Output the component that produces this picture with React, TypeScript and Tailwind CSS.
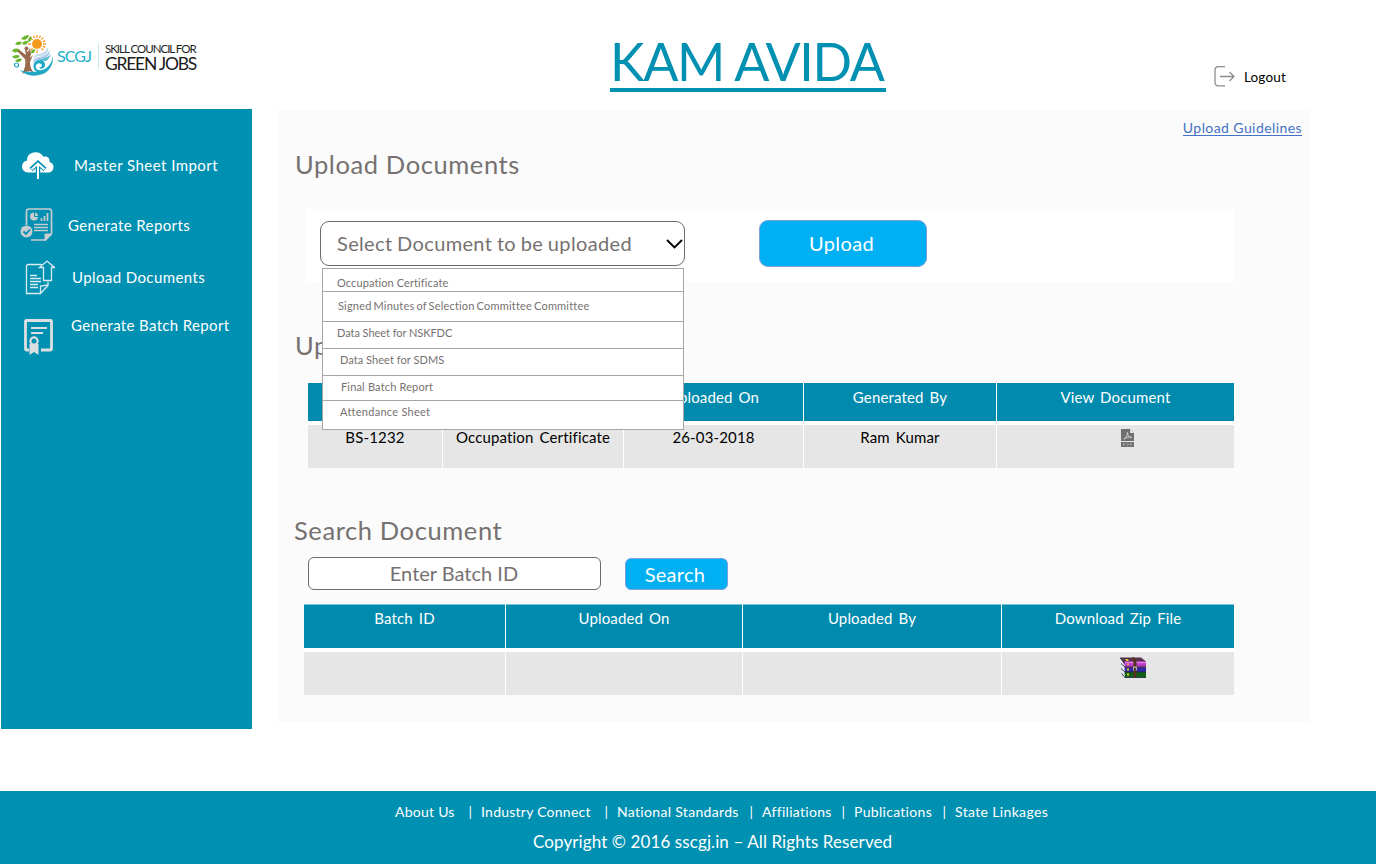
import type { ReactNode } from "react";

function TreeMark() {
  return (
    <svg width="44" height="44" viewBox="0 0 44 44" className="shrink-0">
      <g fill="#f59a1f" stroke="#f59a1f">
        <circle cx="26" cy="10" r="5" stroke="none" />
        <path d="M26 1v3M26 16v3M17 10h3M32 10h3M19.6 3.6l2 2M30.4 14.4l2 2M32.4 3.6l-2 2M21.6 14.4l-2 2M22.6 1.7l1 2.4M29.4 1.7l-1 2.4M34.3 6.6l-2.4 1M34.3 13.4l-2.4-1" strokeWidth="1.3" />
      </g>
      <g fill="#6cb52d">
        <path d="M10 5c2-3 5-4 8-4-1 4-4 6-8 4z" />
        <path d="M4 10c2-3 5-3 7-2-1 3-4 4-7 2z" />
        <path d="M1 17c2-3 5-3 8-1-2 3-6 3-8 1z" />
        <path d="M1 23c2-2 5-3 8-1-2 3-6 3-8 1z" />
        <path d="M11 10c1-3 4-4 6-3 0 3-3 5-6 3z" />
        <path d="M17 8c0-3 1-5 3-6 1 3 0 6-3 6z" />
        <path d="M4 27c2-2 4-3 7-2-1 3-4 4-7 2z" />
        <path d="M20 19c0-3 2-4 4-4 0 3-1 5-4 4z" />
      </g>
      <path d="M7 15l8 6c-.5-3-1-4-1-6l3 3 2-4 1 6-1 4 3-3-3 7c0 4 1 8 4 11l-4-2-4 1-4 2c3-5 4-11 3-15l-7-7z" fill="#9a6a4d" />
      <circle cx="15.500" cy="14.500" r="2" fill="#9a6a4d" />
      <path d="M22 27c5-7 11-1 17-11 0 5-3 8-9 9-3 1-6 1-8 4z" fill="#a9cbe9" />
      <path d="M23 22c5-4 9 0 14-9 1 6-3 10-9 9-2 0-4 1-5 3z" fill="#c5dcf1" />
      <path d="M42 22c1 9-5 18-14 19-8 2-15-1-19-5 7 3 13 1 17 2-4-2-5-8-1-11 4-3 10 0 9 5-1 3-5 4-6 1 2 1 4-1 2-3-3-2-6 1-5 4 2 5 15 2 17-12z" fill="#20a9c4" />
      <path d="M24 28c4-4 10-2 16-8-3 8-6 8-10 6z" fill="#56bcd2" />
      <circle cx="5.500" cy="31" r="2" fill="none" stroke="#20a9c4" strokeWidth="1.200" />
    </svg>
  );
}

function CloudIcon() {
  return (
    <svg width="33" height="29" viewBox="0 0 33 29" fill="none" className="shrink-0">
      <path d="M7.500 21.500C3.500 21.500 1 18.500 1 15.500S3 10 6 9.500C6 4 10 1.300 14.500 1.300c4 0 6.500 2 7.800 4.500 4-1.200 7 1.500 6.200 5.200 2.500.8 4 2.500 4 4.900 0 3.300-2.500 5.600-5.500 5.600z" fill="white" />
      <path d="M10 18.500l7-6.500 7 6.500M17 13v15" stroke="#0090b1" strokeWidth="4.500" />
      <path d="M10.500 18.500l6.500-6 6.500 6M17 13V28" stroke="white" strokeWidth="2" />
    </svg>
  );
}

function ReportIcon() {
  return (
    <svg width="33" height="34" viewBox="0 0 33 34" fill="none" stroke="#c6cccf" className="shrink-0">
      <path d="M6.500 17V3.500Q6.500 1 9 1h20q2.500 0 2.500 2.500V26l-6 6H11" strokeWidth="1.700" />
      <path d="M25 32.500V26h6.500z" fill="#c6cccf" />
      <circle cx="14" cy="8.500" r="4" fill="#c6cccf" stroke="none" />
      <path d="M14.500 4v4.500H19" stroke="#0090b1" strokeWidth="1" />
      <path d="M21.500 13v-3M24.500 13V8M27.500 13V5" strokeWidth="1.700" />
      <path d="M14 16.500h14M14 19.500h14M14 22.500h14" strokeWidth="1.500" />
      <circle cx="6.500" cy="23.500" r="6" fill="#c6cccf" stroke="none" />
      <path d="M3.500 23.500l2.500 2.500 4-4.500" stroke="#0090b1" strokeWidth="1.800" />
    </svg>
  );
}

function UploadDocIcon() {
  return (
    <svg width="30" height="35" viewBox="0 0 30 35" fill="none" stroke="#d9ecf2" strokeWidth="1.300" className="shrink-0">
      <path d="M17 4.500H3.500Q1.500 4.500 1.500 6.500v27h14l7.500-8V21.500" />
      <path d="M15.500 33.500v-7.500l7.500-1" />
      <path d="M18.500 20.500V7.500h-4L22 1l7.500 6.500h-3v13z" />
      <path d="M5 15.500h7M5 18.500h11M5 21.500h11M5 24.500h8M5 27.500h8" />
    </svg>
  );
}

function CertificateIcon() {
  return (
    <svg width="31" height="37" viewBox="0 0 31 37" fill="none" stroke="#dcdfe1" className="shrink-0">
      <path d="M6 32H3.500Q2.500 32 2.500 31V3.500Q2.500 2.500 3.500 2.500h24q1 0 1 1V31q0 1-1 1H18" strokeWidth="2.800" />
      <path d="M8 10h16M8 15h12" strokeWidth="2" />
      <path d="M6.500 26v11l4.500-3 4.500 3V26z" fill="#dcdfe1" stroke="none" />
      <circle cx="11" cy="23" r="3.600" fill="#0090b1" strokeWidth="2.200" />
    </svg>
  );
}

function PdfIcon() {
  return (
    <svg width="13" height="18" viewBox="0 0 13 18" className="block">
      <path d="M0 0h9l4 4v8H0z" fill="#707070" />
      <path d="M9 0v4h4z" fill="#e2e2e2" />
      <path d="M2.500 10c2-.5 4-3.500 4-6.500 0 3 1.500 5 4.500 5-3.500-1-6 0-7.500 1.500" fill="none" stroke="#d5d5d5" strokeWidth=".9" />
      <path d="M0 13h13v5H0z" fill="#707070" />
      <path d="M2.500 17v-2.700h1.300v1.200H2.500M6 14.300v2.400h.8l.7-.6v-1.200l-.7-.6zM9.500 17v-2.700h1.600M9.500 15.600H11" fill="none" stroke="#a9a9a9" strokeWidth=".7" />
    </svg>
  );
}

function ArchiveIcon() {
  return (
    <svg width="27" height="21" viewBox="0 0 27 21" className="block">
      <path d="M0 1l5 5v14.500L2 17.500z" fill="#e4e4ef" />
      <path d="M0 .5h21l5 4V7H4z" fill="#55304f" />
      <path d="M3.500 4.500h22.500v5H5z" fill="#b93cc6" />
      <path d="M5 5.500h21" stroke="#e27be6" strokeWidth="1.500" />
      <path d="M4.500 9.500h21.500V15H5z" fill="#2c26a4" />
      <path d="M5 10h21" stroke="#682950" strokeWidth="1.300" />
      <path d="M4.500 15h21.500v5.500H5z" fill="#116018" />
      <path d="M5 15h21M4.500 20.500h21.500" stroke="#202536" strokeWidth=".8" />
      <path d="M0 1l5 5M1 6.500l4 3.500M1 11.500l4 3.500M1.500 16.500l3.500 4" stroke="#30304a" strokeWidth=".9" />
      <path d="M11.500.5h3l2 4v16h-3V5z" fill="#56301c" />
      <path d="M13 9.500h4v4h-4z" fill="#b8aaa0" />
      <path d="M14 11h2v2.500h-2z" fill="#3d3430" />
      <path d="M5 2h2.500L9 4H6.500zM7 11.500h2v2H7zM7 16.500h2v2H7z" fill="#e6d21c" />
      <path d="M7 6.500h2v2H7z" fill="#d98b74" />
    </svg>
  );
}

const navItems: { label: string; icon: ReactNode; row: string; text: string }[] = [
  { label: "Master Sheet Import", icon: <CloudIcon />, row: "h-[50px] pl-5 gap-[20px]", text: "tracking-[0.45px]" },
  { label: "Generate Reports", icon: <ReportIcon />, row: "mt-[10px] h-[50px] pl-[19px] gap-[15px]", text: "tracking-[0.38px]" },
  { label: "Upload Documents", icon: <UploadDocIcon />, row: "mt-[2px] h-[50px] pl-6 gap-[17px]", text: "tracking-[0.4px]" },
  { label: "Generate Batch Report", icon: <CertificateIcon />, row: "mt-[9px] h-[50px] pl-[22px] gap-[17px]", text: "tracking-[0.35px] mb-[22px]" },
];

const options = [
  { label: "Occupation Certificate", row: "h-[23px] pl-[14px] pt-[7px]", text: "tracking-[0.1px]" },
  { label: "Signed Minutes of Selection Committee Committee", row: "h-[30px] pl-[15px]", text: "tracking-[0.19px] [word-spacing:-1px]" },
  { label: "Data Sheet for NSKFDC", row: "h-[27px] pl-[14px] pb-[3px]", text: "tracking-[-0.05px]" },
  { label: "Data Sheet for SDMS", row: "h-[27px] pl-[17px] pb-[3px]", text: "tracking-[0.05px]" },
  { label: "Final Batch Report", row: "h-[25px] pl-[18px] pb-[2px]", text: "tracking-[0.17px]" },
  { label: "Attendance Sheet", row: "h-[29px] pl-[17px] pb-[5px]", text: "tracking-[0.27px]" },
];

const footerLinks = [
  { label: "About Us", cls: "w-[86px]", text: "tracking-[0.25px]" },
  { label: "Industry Connect", cls: "w-[136px]", text: "tracking-[0.25px]" },
  { label: "National Standards", cls: "w-[145px]", text: "tracking-[0.32px]" },
  { label: "Affiliations", cls: "w-[92px]", text: "tracking-[0.3px]" },
  { label: "Publications", cls: "w-[101px]", text: "tracking-[0.3px]" },
  { label: "State Linkages", cls: "w-[94px]", text: "tracking-[0.35px]" },
];

function Heading({ children, className }: { children: ReactNode; className: string }) {
  return <h2 className={`whitespace-nowrap text-[25.5px] leading-8 tracking-[0.6px] text-[#767171] ${className}`}>{children}</h2>;
}

export default function App() {
  return (
    <div className="flex h-[864px] w-[1376px] flex-col overflow-hidden bg-white font-['Lato',sans-serif] [font-variant-ligatures:none]">
      <header className="flex h-[109px] shrink-0">
        <div className="flex w-[610px] items-start pl-[11px] pt-[34px]">
          <TreeMark />
          <span className="ml-[2px] mt-[12px] w-[36px] whitespace-nowrap text-[16px] leading-5 tracking-[-0.9px] text-[#20b0c8]">SCGJ</span>
          <div className="ml-[5px] mt-[9px] h-[26px] w-px bg-[#c8ecf2]" />
          <div className="ml-[6px] mt-[8px] whitespace-nowrap text-[#1c1c1c]">
            <div className="text-[11.5px] leading-[14px] tracking-[-1px]">SKILL COUNCIL FOR</div>
            <div className="text-[17.5px] leading-[16px] tracking-[-1.25px]">GREEN JOBS</div>
          </div>
        </div>
        <h1 className="mt-[32px] h-[60px] w-[276px] whitespace-nowrap border-b-4 border-[#0090b1] text-[52px] leading-[59px] tracking-[-1.3px] text-[#0090b1]">KAM AVIDA</h1>
        <button className="ml-[328px] mt-[65px] flex h-[23px] items-center gap-[9px]">
          <svg width="21" height="22" viewBox="0 0 21 22" fill="none" stroke="#8c8c8c" strokeWidth="1.300">
            <path d="M11 .7H4.500Q1 .7 1 4v12.500q0 3.300 3.500 3.300H11M6 10.500h14M15.500 6L20 10.500 15.500 15" />
          </svg>
          <span className="text-[13.5px] leading-5 tracking-[0.15px] text-black">Logout</span>
        </button>
      </header>

      <div className="flex h-[682px] shrink-0">
        <nav className="ml-px h-[620px] w-[251px] bg-[#0090b1] pt-[31px]">
          {navItems.map((n) => (
            <a key={n.label} className={`flex items-center whitespace-nowrap text-[15px] text-white ${n.row}`}>
              {n.icon}
              <span className={n.text}>{n.label}</span>
            </a>
          ))}
        </nav>

        <main className="ml-[25px] mt-px flex h-[612px] w-[1033px] flex-col bg-[#fbfbfb]">
          <a className="mr-2 mt-[9px] self-end whitespace-nowrap border-b border-[#4472c4] pt-px text-[14px] leading-[15px] tracking-[0.42px] text-[#4472c4]">Upload Guidelines</a>
          <Heading className="ml-[18px] mt-[12px]">Upload Documents</Heading>

          <div className="ml-[29px] mt-[29px] flex h-[73px] w-[929px] shrink-0 bg-white">
            <div className="relative ml-[14px] mt-[12px] h-[45px] w-[365px]">
              <button className="flex h-[45px] w-[365px] items-center justify-between rounded-[9px] border border-[#6b6b6b] bg-white pl-4 pr-px text-[20px] text-[#767171]">
                <span className="mb-[2px] whitespace-nowrap tracking-[0.35px] [word-spacing:-0.8px]">Select Document to be uploaded</span>
                <svg width="17" height="10" viewBox="0 0 17 10" fill="none" stroke="black" strokeWidth="1.800">
                  <path d="M1 1l7.500 7.500L16 1" />
                </svg>
              </button>
              <ul className="absolute left-[2px] top-[47px] z-10 w-[362px] border-x border-t border-[#a6a6a6] bg-white text-[11px] text-[#767171]">
                {options.map((o) => (
                  <li key={o.label} className={`flex items-center whitespace-nowrap border-b border-[#a6a6a6] ${o.row}`}>
                    <span className={o.text}>{o.label}</span>
                  </li>
                ))}
              </ul>
            </div>
            <button className="ml-[74px] mt-[11px] h-[47px] w-[168px] rounded-[9px] border border-[#7f9fdc] bg-[#00b0f3] pb-[2px] pr-[3px] text-[20px] tracking-[0.4px] text-white">Upload</button>
          </div>

          <Heading className="ml-[18px] mt-[47px]">Uploaded Documents</Heading>
          <div className="ml-[31px] mt-[22px] grid w-[926px] shrink-0 grid-cols-[134px_180px_179px_192px_237px] grid-rows-[38px_43px] gap-x-px gap-y-[4px] bg-white text-center text-[15px] leading-5 [word-spacing:2px]">
            {["Batch ID", "Document Name", "Uploaded On", "Generated By", "View Document"].map((h) => (
              <div key={h} className="bg-[#008bae] pt-[4px] tracking-[0.15px] text-white">{h}</div>
            ))}
            {["BS-1232", "Occupation Certificate", "26-03-2018", "Ram Kumar"].map((c) => (
              <div key={c} className="whitespace-nowrap bg-[#e6e6e6] pt-[2px] tracking-[0.15px] text-black">{c}</div>
            ))}
            <div className="flex justify-center bg-[#e6e6e6] pl-6 pt-[4px]"><PdfIcon /></div>
          </div>

          <Heading className="ml-[17px] mt-[46px]">Search Document</Heading>
          <div className="ml-[31px] mt-[11px] flex h-[33px] shrink-0">
            <div className="flex h-[33px] w-[293px] items-center justify-center rounded-[6px] border border-[#6b6b6b] bg-white pb-[2px] pr-px text-[20px] text-[#767171]">Enter Batch ID</div>
            <button className="ml-[24px] mt-px h-[32px] w-[103px] rounded-[6px] border border-[#7f9fdc] bg-[#00b0f3] pr-[3px] pb-px text-[20px] leading-[28px] tracking-[0.3px] text-white">Search</button>
          </div>
          <div className="ml-[27px] mt-[14px] grid w-[930px] shrink-0 grid-cols-[201px_236px_258px_232px] grid-rows-[44px_43px] gap-x-px gap-y-[4px] bg-white text-center text-[15px] leading-5 [word-spacing:2px]">
            {["Batch ID", "Uploaded On", "Uploaded By", "Download Zip File"].map((h) => (
              <div key={h} className="border-t border-[#7fc4d6] bg-[#008bae] pt-[3px] tracking-[0.15px] text-white">{h}</div>
            ))}
            <div className="bg-[#e6e6e6]" />
            <div className="bg-[#e6e6e6]" />
            <div className="bg-[#e6e6e6]" />
            <div className="flex justify-center bg-[#e6e6e6] pl-[30px] pt-[5px]"><ArchiveIcon /></div>
          </div>
        </main>
      </div>

      <footer className="h-[73px] shrink-0 bg-[#0090b1] text-white">
        <div className="flex pl-[395px] pt-[11px] text-[14px] leading-5">
          {footerLinks.map((l, i) => (
            <span key={l.label} className={`flex shrink-0 justify-between whitespace-nowrap ${l.cls}`}>
              <span className={l.text}>{l.label}</span>
              {i < footerLinks.length - 1 && <span className="pr-[9px]">|</span>}
            </span>
          ))}
        </div>
        <p className="mt-[8px] whitespace-nowrap pl-[533px] text-[17px] leading-6 tracking-[0.1px]">Copyright © 2016 sscgj.in – All Rights Reserved</p>
      </footer>
    </div>
  );
}
